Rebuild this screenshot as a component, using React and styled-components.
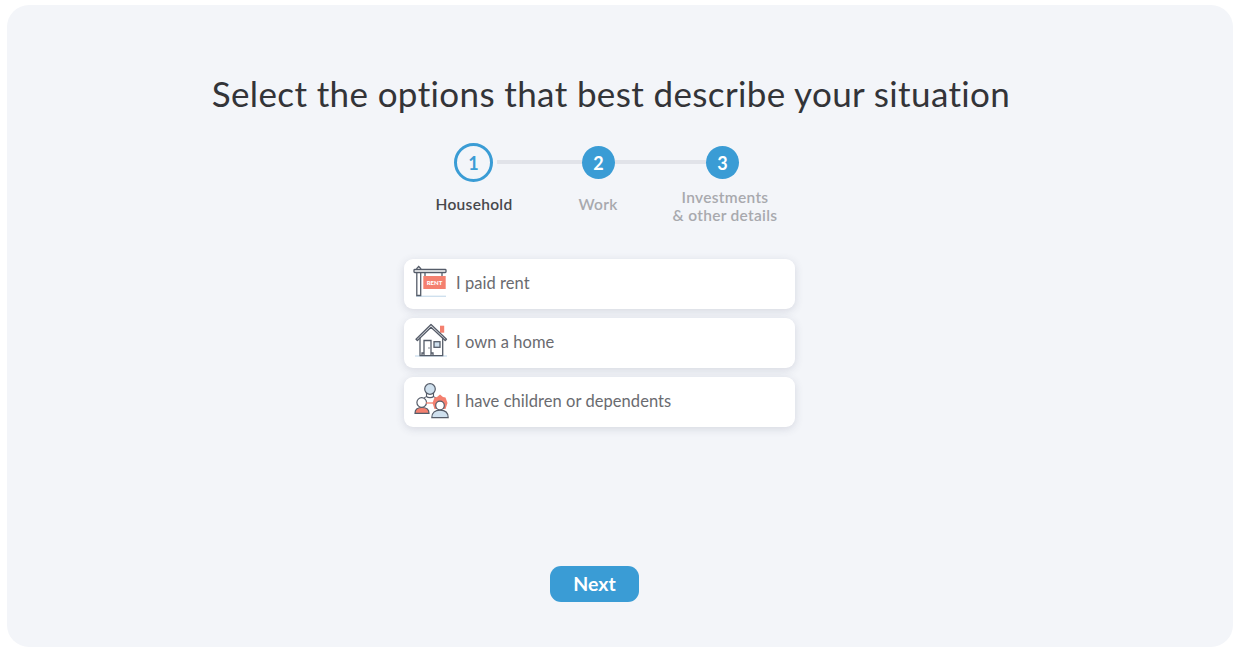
import React from 'react';
import styled, { createGlobalStyle } from 'styled-components';

const GlobalStyle = createGlobalStyle`
  html, body {
    margin: 0;
    padding: 0;
    background: #fff;
    font-family: "Lato", "Open Sans", sans-serif;
  }
`;

const Panel = styled.main`
  box-sizing: border-box;
  width: 1226px;
  height: 642px;
  margin: 5px 0 0 7px;
  padding-top: 67px;
  background: #f3f5f9;
  border-radius: 22px;
  display: flex;
  flex-direction: column;
`;

const Title = styled.h1`
  margin: 0;
  width: 1208px;
  height: 42px;
  text-align: center;
  font-size: 35px;
  line-height: 42px;
  font-weight: 400;
  letter-spacing: 0.37px;
  color: #333438;
`;

const Stepper = styled.div`
  margin: 29px 0 0 417px;
  width: 354px;
`;

const Rail = styled.div`
  display: flex;
  align-items: center;
  margin-left: 30px;
  height: 39px;
`;

const Dot = styled.div`
  box-sizing: border-box;
  flex: none;
  width: ${p => (p.$current ? 39 : 33)}px;
  height: ${p => (p.$current ? 39 : 33)}px;
  padding-top: 1px;
  border-radius: 50%;
  display: flex;
  align-items: center;
  justify-content: center;
  font-size: 18px;
  font-weight: 700;
  color: ${p => (p.$current ? '#3a9cd5' : '#fff')};
  background: ${p => (p.$current ? 'transparent' : '#3a9cd5')};
  border: ${p => (p.$current ? '3px solid #3a9cd5' : 'none')};
`;

const Line = styled.div`
  height: 4px;
  width: ${p => p.$width}px;
  margin-left: ${p => p.$gap || 0}px;
  margin-bottom: 1px;
  background: #e1e3e9;
`;

const Labels = styled.div`
  display: grid;
  grid-template-columns: 100px 148px 106px;
  height: 45px;
  margin-top: 1px;
  align-items: center;
`;

const Label = styled.div`
  text-align: center;
  font-size: 15.5px;
  line-height: 18px;
  font-weight: 600;
  letter-spacing: 0.3px;
  padding-bottom: ${p => (p.$single ? 4 : 0)}px;
  color: ${p => (p.$current ? '#47484c' : '#a8a9ae')};
`;

const Options = styled.div`
  margin: 31px 0 0 397px;
  width: 391px;
  display: flex;
  flex-direction: column;
  gap: 9px;
`;

const Option = styled.div`
  box-sizing: border-box;
  height: 50px;
  padding-left: 9px;
  background: #fff;
  border-radius: 9px;
  box-shadow: 0 2px 8px rgba(60, 70, 100, 0.16);
  display: flex;
  align-items: center;
  gap: 7px;
`;

const OptionText = styled.span`
  padding-bottom: 2px;
  font-size: 16.5px;
  letter-spacing: 0.05px;
  color: #6a6b70;
`;

const Footer = styled.div`
  margin: 139px 0 0 543px;
`;

const NextButton = styled.button`
  display: block;
  width: 89px;
  height: 36px;
  padding: 0 0 2px;
  border: none;
  border-radius: 11px;
  background: #3a9cd5;
  color: #fff;
  font-family: inherit;
  font-size: 19.5px;
  font-weight: 700;
`;

const ink = '#555c69';
const coral = '#f4806f';
const sky = '#cfe0ee';

const RentIcon = () => (
  <svg width="36" height="40" viewBox="0 0 36 40">
    <line x1="3" y1="32.3" x2="33" y2="32.3" stroke={sky} strokeWidth="1.4" />
    <path d="M3.8 31.5V4.5L5.7 2.5l2 2v27z" fill="#fff" stroke={ink} strokeWidth="1.3" />
    <rect x="1" y="5.5" width="32" height="3" rx="0.8" fill="#fff" stroke={ink} strokeWidth="1.3" />
    <path d="M12 8.5V12M29 8.5V12" stroke={ink} strokeWidth="1.3" />
    <rect x="10.3" y="12" width="22.4" height="13" fill={coral} />
    <text x="21.5" y="20.8" textAnchor="middle" fontSize="6" fontWeight="900" fill="#fff" fontFamily="Lato, sans-serif">RENT</text>
  </svg>
);

const HomeIcon = () => (
  <svg width="36" height="40" viewBox="0 0 36 40">
    <rect x="27" y="2.7" width="4.2" height="7" fill={coral} />
    <line x1="2" y1="33" x2="34" y2="33" stroke={sky} strokeWidth="1.4" />
    <path d="M3 16.2L18 1.5l15.5 14.7-1.3 1.3L18 4.2 4.4 17.5z" fill="#fff" stroke={ink} strokeWidth="1.3" strokeLinejoin="round" />
    <path d="M7 14.5V32.6H29.7V14.5" fill="none" stroke={ink} strokeWidth="1.3" />
    <path d="M11 32.6V17.5H18V32.6M9 32.6V30H11M18 30H20V32.6" fill="none" stroke={ink} strokeWidth="1.3" />
    <circle cx="16" cy="25" r="0.7" fill={ink} />
    <rect x="21" y="18.7" width="6" height="5.6" fill={sky} stroke={ink} strokeWidth="1.3" />
  </svg>
);

const PeopleIcon = () => (
  <svg width="36" height="40" viewBox="0 0 36 40">
    <path d="M10 20c0-4 3-6 7-6s7 2 7 6" fill="#fff" stroke={ink} strokeWidth="1.2" />
    <path d="M13.5 10h7v4.5c-1.500 1.5-5.500 1.5-7 0z" fill="#fff" stroke={ink} strokeWidth="1.1" />
    <circle cx="17" cy="7" r="5.3" fill={sky} stroke={ink} strokeWidth="1.2" />
    <path d="M2 31.3c0-4 2.8-5.8 7-5.8s7 1.8 7 5.8z" fill={coral} stroke={ink} strokeWidth="1.2" />
    <circle cx="8.7" cy="20.5" r="4.8" fill="#fff" stroke={ink} strokeWidth="1.2" />
    <line x1="13" y1="21" x2="20" y2="21" stroke={coral} strokeWidth="1.3" />
    <path d="M18.8 35.7c0-5 3.5-7.5 8.2-7.5s8.2 2.5 8.2 7.5z" fill={sky} stroke={ink} strokeWidth="1.2" />
    <path d="M19.5 21L21.5 15.5L24 15L27 12.5L30 15L32.5 15.5L34.5 21L32.5 27H21.5z" fill={coral} />
    <circle cx="27" cy="23.5" r="4.3" fill="#fff" stroke={ink} strokeWidth="1.2" />
  </svg>
);

const options = [
  { text: 'I paid rent', Icon: RentIcon },
  { text: 'I own a home', Icon: HomeIcon },
  { text: 'I have children or dependents', Icon: PeopleIcon },
];

const App = () => (
  <>
    <GlobalStyle />
    <Panel>
      <Title>Select the options that best describe your situation</Title>
      <Stepper>
        <Rail>
          <Dot $current>1</Dot>
          <Line $gap={4} $width={85} />
          <Dot>2</Dot>
          <Line $width={91} />
          <Dot>3</Dot>
        </Rail>
        <Labels>
          <Label $current $single>Household</Label>
          <Label $single>Work</Label>
          <Label>Investments<br />&amp; other details</Label>
        </Labels>
      </Stepper>
      <Options>
        {options.map(({ text, Icon }) => (
          <Option key={text}>
            <Icon />
            <OptionText>{text}</OptionText>
          </Option>
        ))}
      </Options>
      <Footer>
        <NextButton>Next</NextButton>
      </Footer>
    </Panel>
  </>
);

export default App;
